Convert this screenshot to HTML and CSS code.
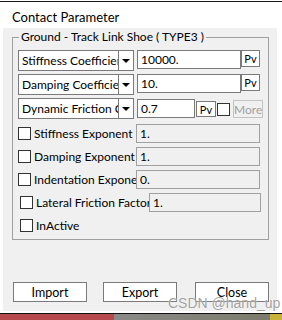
FILE: index.html
```html
<!DOCTYPE html>
<html lang="en">
<head>
  <meta charset="UTF-8" />
  <title>Contact Parameter</title>
  <link rel="stylesheet" href="styles.css">
</head>
<body>
  <div class="titlebar">Contact Parameter</div>
  <div class="dialog">
    <fieldset class="group">
      <legend>Ground - Track Link Shoe ( TYPE3 )</legend>

      <div class="row">
        <div class="combo"><span class="combo-text">Stiffness Coefficient</span><span class="combo-arrow"></span></div>
        <input class="field field-long" type="text" value="10000." />
        <button class="pv">Pv</button>
      </div>
      <div class="row">
        <div class="combo"><span class="combo-text">Damping Coefficient</span><span class="combo-arrow"></span></div>
        <input class="field field-long" type="text" value="10." />
        <button class="pv">Pv</button>
      </div>
      <div class="row">
        <div class="combo"><span class="combo-text">Dynamic Friction Coefficient</span><span class="combo-arrow"></span></div>
        <input class="field field-short" type="text" value="0.7" />
        <button class="pv pv-small">Pv</button>
        <span class="check check-inline"></span>
        <button class="more" disabled>More</button>
      </div>

      <div class="check-row first">
        <span class="check"></span>
        <span class="check-label">Stiffness Exponent</span>
        <input class="field field-off" type="text" value="1." disabled />
      </div>
      <div class="check-row">
        <span class="check"></span>
        <span class="check-label">Damping Exponent</span>
        <input class="field field-off" type="text" value="1." disabled />
      </div>
      <div class="check-row">
        <span class="check"></span>
        <span class="check-label">Indentation Exponent</span>
        <input class="field field-off" type="text" value="0." disabled />
      </div>
      <div class="check-row indent">
        <span class="check"></span>
        <span class="check-label check-label-wide">Lateral Friction Factor</span>
        <input class="field field-off field-mid" type="text" value="1." disabled />
      </div>
      <div class="check-row indent">
        <span class="check"></span>
        <span class="check-label">InActive</span>
      </div>
    </fieldset>

    <div class="actions">
      <button class="action">Import</button>
      <button class="action action-export">Export</button>
      <button class="action action-close">Close</button>
    </div>
  </div>
  <div class="taskbar"></div>
  <div class="watermark">CSDN @hand_up</div>
</body>
</html>
```

FILE: styles.css
```css
body {
  margin: 0;
  width: 282px;
  height: 320px;
  background: #fff;
  font-family: Lato, "Noto Sans", sans-serif;
  font-size: 12px;
  color: #000;
  position: relative;
  overflow: hidden;
}
.titlebar {
  margin-top: 1px;
  border-top: 1px solid #1a1a1a;
  height: 22px;
  padding: 4px 0 0 12px;
  line-height: 22px;
  font-size: 13px;
}
.dialog {
  margin: 0 5px 0 3px;
  height: 281px;
  padding: 2px 0 0 9px;
  background: #f0f0f0;
}
.group {
  margin: 0;
  width: 244px;
  height: 202px;
  padding: 6px 5px 0 5px;
  border: 1px solid #a0a0a0;
}
.group legend {
  margin-left: 1px;
  padding: 0 2px;
  line-height: 14px;
}
.row {
  display: flex;
  align-items: flex-start;
  height: 20px;
  margin-bottom: 4px;
}
.combo {
  display: flex;
  width: 114px;
  height: 19px;
  border: 1px solid #7a7a7a;
  background: #fff;
}
.combo-text {
  flex: 1;
  padding-left: 3px;
  line-height: 19px;
  white-space: nowrap;
  overflow: hidden;
}
.combo-arrow {
  width: 14px;
  border-left: 1px solid #7a7a7a;
  position: relative;
}
.combo-arrow::after {
  content: "";
  position: absolute;
  left: 3px;
  top: 8px;
  border-left: 4px solid transparent;
  border-right: 4px solid transparent;
  border-top: 4px solid #000;
}
.field {
  box-sizing: border-box;
  height: 19px;
  margin: 0 0 0 3px;
  padding: 0 0 0 3px;
  border: 1px solid #7a7a7a;
  background: #fff;
  font: inherit;
  color: #000;
  outline: none;
}
.field-long {
  width: 104px;
}
.field-short {
  width: 58px;
  margin-top: 1px;
}
.field-off {
  width: 124px;
  margin-left: 0;
  background: #f0f0f0;
  border-color: #a0a0a0;
}
.field-mid {
  width: 112px;
}
.pv {
  box-sizing: border-box;
  width: 19px;
  height: 17px;
  margin: 0;
  padding: 0;
  border: 1px solid #7a7a7a;
  background: #fff;
  font: inherit;
  font-size: 11px;
}
.pv-small {
  width: 20px;
  height: 16px;
  margin: 3px 0 0 1px;
}
.check {
  box-sizing: border-box;
  width: 13px;
  height: 13px;
  border: 1px solid #333;
  background: #fff;
  flex: none;
}
.check-inline {
  margin: 5px 0 0 1px;
}
.more {
  box-sizing: border-box;
  width: 30px;
  height: 18px;
  margin: 2px 0 0 3px;
  padding: 0;
  border: 1px solid #c4c4c4;
  background: #f0f0f0;
  color: #a0a0a0;
  font: inherit;
}
.check-row {
  display: flex;
  align-items: center;
  height: 19px;
  margin-bottom: 4px;
}
.check-row.first {
  margin-top: 6px;
}
.check-label {
  width: 102px;
  margin-left: 3px;
  white-space: nowrap;
  overflow: hidden;
}
.indent .check {
  margin-left: 2px;
}
.check-label-wide {
  width: 113px;
}
.actions {
  display: flex;
  margin: 42px 0 0 1px;
}
.action {
  box-sizing: border-box;
  width: 74px;
  height: 20px;
  margin: 0;
  padding: 0;
  border: 1px solid #7a7a7a;
  background: #fff;
  font: inherit;
  font-size: 12.5px;
}
.action-export {
  margin-left: 16px;
}
.action-close {
  margin-left: 18px;
}
.taskbar {
  margin-top: 2px;
  height: 6px;
  border-top: 1px solid #111;
  background: linear-gradient(to right, #b44a4c 0, #b44a4c 114px, #8a8a88 114px, #7c7c6c 270px, #c8b23a 270px);
}
.watermark {
  position: absolute;
  left: 168px;
  top: 295px;
  font-family: "Liberation Sans", sans-serif;
  font-size: 14px;
  color: rgba(120, 120, 120, 0.7);
  text-shadow: 0 0 1px #fff;
}
```
